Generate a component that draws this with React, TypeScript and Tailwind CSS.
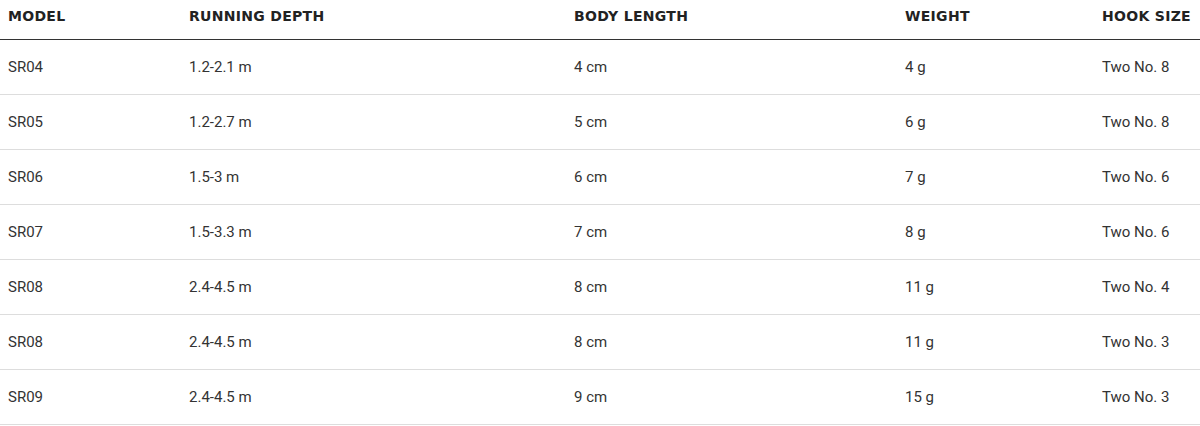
import React from 'react';

const rows = [
  ['SR04', '1.2-2.1 m', '4 cm', '4 g', 'Two No. 8'],
  ['SR05', '1.2-2.7 m', '5 cm', '6 g', 'Two No. 8'],
  ['SR06', '1.5-3 m', '6 cm', '7 g', 'Two No. 6'],
  ['SR07', '1.5-3.3 m', '7 cm', '8 g', 'Two No. 6'],
  ['SR08', '2.4-4.5 m', '8 cm', '11 g', 'Two No. 4'],
  ['SR08', '2.4-4.5 m', '8 cm', '11 g', 'Two No. 3'],
  ['SR09', '2.4-4.5 m', '9 cm', '15 g', 'Two No. 3'],
];

const headers = ['Model', 'Running depth', 'Body length', 'Weight', 'Hook size'];

export default function App() {
  return (
    <div className="w-[1200px] bg-white">
      {/* header */}
      <div className="grid grid-cols-[181px_385px_331px_197px_1fr] h-[40px] border-b border-[#333]">
        {headers.map((h) => (
          <div
            key={h}
            className="pl-2 flex items-center pb-[6px] uppercase text-[14px] font-bold tracking-[0.3px] text-[#222] font-['DejaVu_Sans',sans-serif]"
          >
            {h}
          </div>
        ))}
      </div>
      {/* body rows */}
      {rows.map((r, i) => (
        <div
          key={i}
          className="grid grid-cols-[181px_385px_331px_197px_1fr] h-[55px] border-b border-[#ddd]"
        >
          {r.map((c, j) => (
            <div
              key={j}
              className="pl-2 flex items-center text-[15px] text-[#333] font-['Roboto',sans-serif]"
            >
              {c}
            </div>
          ))}
        </div>
      ))}
    </div>
  );
}
